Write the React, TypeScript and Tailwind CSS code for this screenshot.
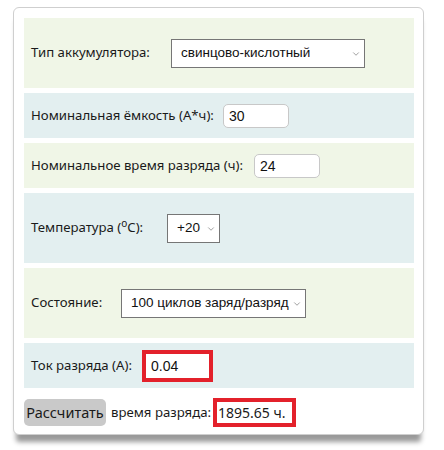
import { ChevronDown } from 'lucide-react'

function Select({ value, width }: { value: string; width: string }) {
  return (
    <div className={`relative h-[29px] ${width}`}>
      <select
        defaultValue={value}
        className="h-full w-full appearance-none border border-[#767676] bg-white pl-[9px] pr-[2px] font-['Liberation_Sans',sans-serif] text-[13.5px] text-[#111] outline-none"
      >
        <option>{value}</option>
      </select>
      <ChevronDown className="pointer-events-none absolute right-[4px] top-[10px] h-[10px] w-[10px] text-[#666]" strokeWidth={1.5} />
    </div>
  )
}

function Field({ value, width }: { value: string; width: string }) {
  return (
    <input
      defaultValue={value}
      className={`h-[24px] ${width} rounded-[5px] border border-[#c8c8c8] bg-white px-[5px] font-['Liberation_Sans',sans-serif] text-[14px] text-[#111] outline-none`}
    />
  )
}

export default function App() {
  return (
    <div className="min-h-[450px] bg-white pl-[13px] pt-[7px] font-['Noto_Sans',sans-serif] text-[13.2px] text-[#1a1a1a]">
      <div className="flex w-[411px] flex-col gap-[5px] rounded-[6px] border border-[#cfcfcf] bg-white pl-[10px] pr-[9px] pt-[10px] pb-[7px] shadow-[0_10px_5px_-3px_rgba(0,0,0,0.4)]">
        <div className="flex h-[70px] items-center bg-[#f0f6e7] pl-[7px]">
          <span className="w-[121px] whitespace-nowrap">Тип аккумулятора:</span>
          <div className="ml-[19px]">
            <Select value="свинцово-кислотный" width="w-[194px]" />
          </div>
        </div>

        <div className="flex h-[45px] items-center bg-[#e3eff0] pl-[7px]">
          <span className="w-[182px] whitespace-nowrap">Номинальная ёмкость (А*ч):</span>
          <div className="ml-[10px]">
            <Field value="30" width="w-[66px]" />
          </div>
        </div>

        <div className="flex h-[45px] items-center bg-[#f0f6e7] pl-[7px]">
          <span className="w-[213px] whitespace-nowrap">Номинальное время разряда (ч):</span>
          <div className="ml-[10px]">
            <Field value="24" width="w-[66px]" />
          </div>
        </div>

        <div className="flex h-[70px] items-center bg-[#e3eff0] pl-[7px]">
          <span className="w-[116px] whitespace-nowrap">
            Температура (<sup className="text-[10px]">o</sup>C):
          </span>
          <div className="ml-[20px]">
            <Select value="+20" width="w-[53px]" />
          </div>
        </div>

        <div className="flex h-[70px] items-center bg-[#f0f6e7] pl-[7px]">
          <span className="w-[69px] whitespace-nowrap">Состояние:</span>
          <div className="ml-[21px]">
            <Select value="100 циклов заряд/разряд" width="w-[185px]" />
          </div>
        </div>

        <div className="flex h-[45px] items-center bg-[#e3eff0] pl-[7px]">
          <span className="w-[104px] whitespace-nowrap">Ток разряда (А):</span>
          <input
            defaultValue="0.04"
            className="ml-[7px] h-[32px] w-[71px] border-4 border-[#e3212b] bg-white px-[5px] font-['Liberation_Sans',sans-serif] text-[14px] text-[#111] outline-none"
          />
        </div>

        <div className="mt-[5px] flex items-center">
          <button className="h-[27px] w-[82px] rounded-[5px] bg-[#c9c9c9] text-[14.5px] text-[#1a1a1a]">Рассчитать</button>
          <span className="ml-[5px] w-[102px] whitespace-nowrap">время разряда:</span>
          <span className="flex h-[29px] items-center border-4 border-[#e3212b] pr-[7px] pl-[1px] text-[14px]">1895.65 ч.</span>
        </div>
      </div>
    </div>
  )
}
